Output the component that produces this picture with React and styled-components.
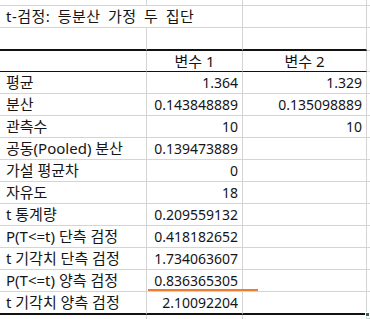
import styled, { createGlobalStyle } from "styled-components";

const GlobalStyle = createGlobalStyle`
  * {
    box-sizing: border-box;
  }
  body {
    margin: 0;
    background: #ffffff;
  }
`;

const GRID = "#d4d4d4";

const lines = {
  grid: `1px solid ${GRID}`,
  thin: "1px solid #111",
  thick: "2px solid #111",
  none: "none",
};

const Sheet = styled.div`
  position: relative;
  width: 370px;
  height: 319px;
  overflow: hidden;
  font-family: "Noto Sans", "Noto Sans CJK KR", sans-serif;
  color: #151515;
`;

const Row = styled.div`
  display: flex;
  height: ${(p) => p.$h}px;
`;

const Cell = styled.div`
  flex: none;
  width: ${(p) => p.$w}px;
  height: 100%;
  padding: 0 ${(p) => (p.$align === "right" ? "4px" : "6px")};
  border-right: ${(p) => (p.$noRight ? "none" : `1px solid ${GRID}`)};
  border-bottom: ${(p) => lines[p.$line || "grid"]};
  font-size: ${(p) => (p.$num ? 14 : 15)}px;
  line-height: ${(p) => p.$lh}px;
  text-align: ${(p) => p.$align || "left"};
  white-space: nowrap;
  overflow: visible;
`;

const Title = styled.span`
  letter-spacing: 0.5px;
  word-spacing: 3px;
`;

const Spare = styled.div`
  flex: 1;
  height: 100%;
  border-bottom: 1px solid ${GRID};
`;

const Marker = styled.div`
  position: absolute;
  left: 148px;
  top: 289px;
  width: 110px;
  height: 2px;
  background: #ed7d31;
`;

const Handle = styled.div`
  position: absolute;
  left: 365px;
  top: 312px;
  width: 5px;
  height: 5px;
  background: #217346;
  border: 1px solid #ffffff;
`;

const widths = [147, 96, 124];

const data = [
  ["평균", "1.364", "1.329"],
  ["분산", "0.143848889", "0.135098889"],
  ["관측수", "10", "10"],
  ["공동(Pooled) 분산", "0.139473889", ""],
  ["가설 평균차", "0", ""],
  ["자유도", "18", ""],
  ["t 통계량", "0.209559132", ""],
  ["P(T<=t) 단측 검정", "0.418182652", ""],
  ["t 기각치 단측 검정", "1.734063607", ""],
  ["P(T<=t) 양측 검정", "0.836365305", ""],
  ["t 기각치 양측 검정", "2.10092204", ""],
];

const SheetRow = ({ h, line = "grid", cells = ["", "", ""], aligns = [], noRight = [], num }) => {
  const border = line === "thick" ? 2 : 1;
  return (
    <Row $h={h}>
      {cells.map((c, i) => (
        <Cell
          key={i}
          $w={widths[i]}
          $line={line}
          $lh={h - border}
          $align={aligns[i]}
          $noRight={noRight[i]}
          $num={num && i > 0}
        >
          {c}
        </Cell>
      ))}
      <Spare />
    </Row>
  );
};

const App = () => {
  return (
    <>
      <GlobalStyle />
      <Sheet>
        <SheetRow h={6} />
        <SheetRow
          h={22}
          cells={[<Title key="t">t-검정: 등분산 가정 두 집단</Title>, "", ""]}
          noRight={[true]}
        />
        <SheetRow h={23} line="thick" />
        <SheetRow h={21} line="thin" cells={["", "변수 1", "변수 2"]} aligns={["left", "center", "center"]} />
        {data.map((r, i) => (
          <SheetRow
            key={r[0]}
            h={i === data.length - 1 ? 23 : 22}
            line={i === data.length - 1 ? "thick" : "grid"}
            cells={r}
            aligns={["left", "right", "right"]}
            num
          />
        ))}
        <SheetRow h={4} line="none" />
        <Marker />
        <Handle />
      </Sheet>
    </>
  );
};

export default App;
